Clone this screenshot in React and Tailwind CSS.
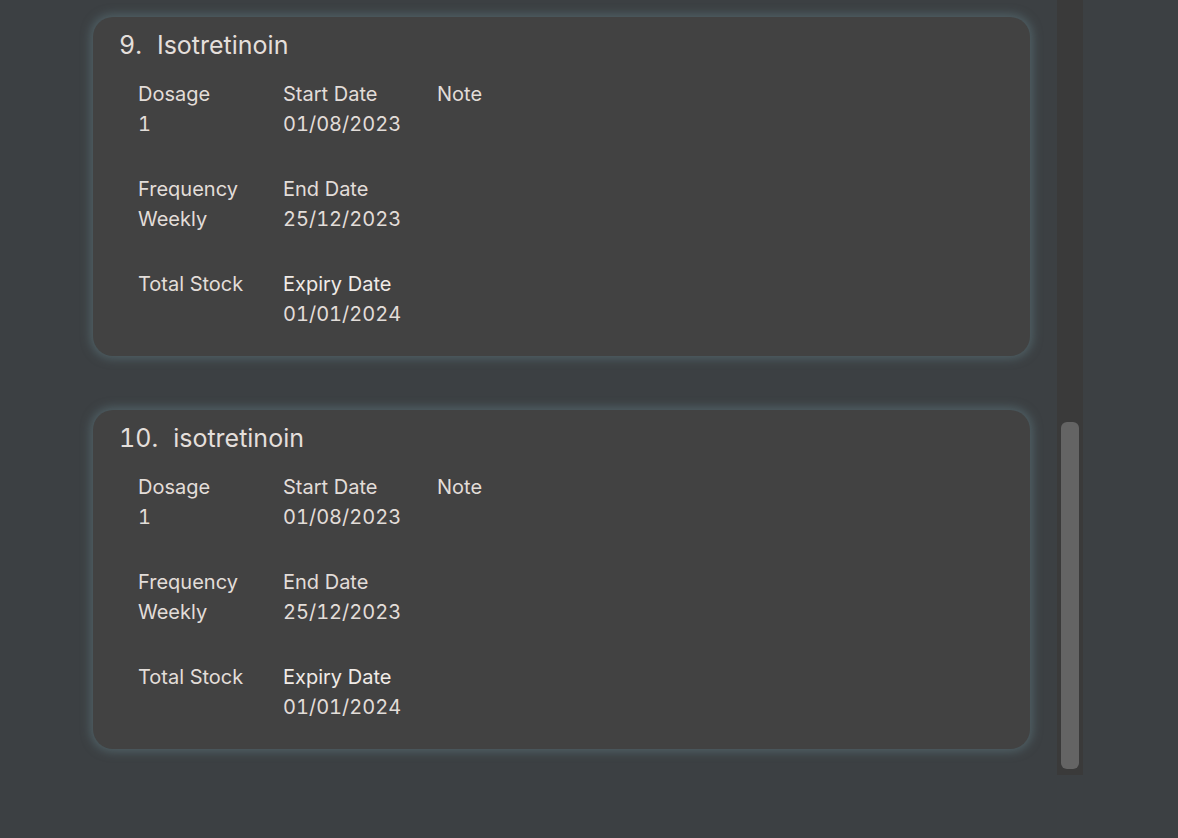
export default function App() {
  const meds = [
    { n: "9.", name: "Isotretinoin" },
    { n: "10.", name: "isotretinoin" },
  ];
  const Field = ({ label, value, bright }) => (
    <div className="flex flex-col">
      <div className={`h-[30px] leading-[30px] ${bright ? "text-[#f0ebe7]" : "text-[#e2ddd9]"}`}>{label}</div>
      <div className="h-[30px] leading-[30px] text-[#e2ddd9] tabular-nums">{value}</div>
    </div>
  );
  return (
    <div
      className="w-[1178px] h-[838px] bg-[#3c4043] overflow-hidden"
      style={{ fontFamily: "Inter, 'Noto Sans', sans-serif" }}
    >
      <div className="flex h-[775px] w-[1083px]">
        <div className="flex-1 pl-[93px] pr-[27px] pt-[17px] flex flex-col gap-[54px]">
          {meds.map((m) => (
            <div
              key={m.n}
              className="h-[339px] bg-[#424242] rounded-[20px] shadow-[0_0_10px_3px_rgba(95,120,128,0.55)] pl-[26px] pt-[11px]"
            >
              <div className="h-[34px] leading-[34px] text-[25px] text-[#e4dfdb] flex tabular-nums">
                <span>{m.n}</span>
                <span className="ml-[15px]">{m.name}</span>
              </div>
              <div className="pl-[19px] pt-[17px] text-[20px] grid grid-cols-[145px_154px_auto] gap-y-[35px]">
                <Field label="Dosage" value="1" />
                <Field label="Start Date" value="01/08/2023" />
                <Field label="Note" value="" />
                <Field label="Frequency" value="Weekly" />
                <Field label="End Date" value="25/12/2023" />
                <div />
                <Field label="Total Stock" value="" />
                <Field label="Expiry Date" value="01/01/2024" bright />
                <div />
              </div>
            </div>
          ))}
        </div>
        <div className="w-[26px] h-[775px] bg-[#3a3a3a] flex flex-col items-center">
          <div className="mt-[422px] w-[18px] h-[347px] rounded-[6px] bg-[#646464]" />
        </div>
      </div>
    </div>
  );
}
